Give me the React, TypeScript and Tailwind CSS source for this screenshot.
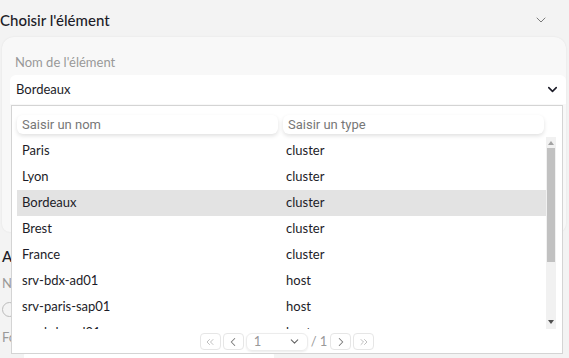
import { ChevronDown, ChevronLeft, ChevronRight, ChevronsLeft, ChevronsRight } from "lucide-react"

const rows = [
  { name: "Paris", type: "cluster" },
  { name: "Lyon", type: "cluster" },
  { name: "Bordeaux", type: "cluster", active: true },
  { name: "Brest", type: "cluster" },
  { name: "France", type: "cluster" },
  { name: "srv-bdx-ad01", type: "host" },
  { name: "srv-paris-sap01", type: "host" },
  { name: "srv-bdx-sql01", type: "host" },
]

export default function App() {
  return (
    <div className="relative w-[569px] h-[358px] overflow-hidden bg-[#f3f3f3] text-[#1c1c28] font-['Lato',sans-serif]">
      {/* section 1 */}
      <div className="flex h-[37px] items-center justify-between pt-[3px] pr-[20px]">
        <h2 className="text-[15px] leading-none font-medium">Choisir l'élément</h2>
        <ChevronDown className="h-[16px] w-[16px] text-[#7a7a7a]" strokeWidth={1.5} />
      </div>
      <div className="ml-[2px] mr-[3px] h-[195px] rounded-t-xl rounded-b-lg bg-[#f8f8f8] pt-[16px] pl-[8px] shadow-[0_0_2px_rgba(0,0,0,0.08)]">
        <div className="pl-[5px] text-[13px] leading-[18px] text-[#999]">Nom de l'élément</div>
        <div className="mt-[4px] flex h-[29px] items-center justify-between rounded-t-md bg-white pl-[6px] pr-[6px] text-[13px]">
          <span>Bordeaux</span>
          <ChevronDown className="h-[15px] w-[15px] text-[#1c1c28]" strokeWidth={2.5} />
        </div>
      </div>

      {/* section 2 (partly hidden) */}
      <div className="pl-[2px] pt-[14px]">
        <h2 className="text-[15px] leading-[20px] font-medium">Attributs</h2>
        <div className="mt-[8px] text-[13px] leading-[18px] text-[#999]">Nom</div>
        <div className="mt-[8px] flex items-center gap-2 text-[13px] text-[#999]">
          <span className="inline-block h-[15px] w-[15px] rounded-full border border-[#bbb]" />
          <span>Cluster</span>
        </div>
        <div className="mt-[8px] text-[13px] leading-[18px] text-[#999]">Format</div>
        <div className="ml-[22px] mt-[6px] h-[20px] w-[250px] rounded bg-white" />
      </div>

      {/* dropdown panel overlay */}
      <div className="absolute left-[11px] top-[105px] flex h-[249px] w-[552px] flex-col border border-[#d4d4d4] bg-white">
        <div className="flex gap-[5px] pl-[5px] pt-[9px]">
          <div className="flex h-[19px] w-[261px] items-center rounded-md bg-white pl-[5px] text-[13px] text-[#777] shadow-[0_2px_4px_rgba(0,0,0,0.12)] font-['Roboto',sans-serif]">
            Saisir un nom
          </div>
          <div className="flex h-[19px] w-[261px] items-center rounded-md bg-white pl-[5px] text-[13px] text-[#777] shadow-[0_2px_4px_rgba(0,0,0,0.12)] font-['Roboto',sans-serif]">
            Saisir un type
          </div>
        </div>
        <div className="mt-[3px] flex h-[192px] pl-[5px]">
          <div className="h-full w-[529px] overflow-hidden pt-[1px]">
            {rows.map((r) => (
              <div
                key={r.name}
                className={`flex h-[26px] items-center text-[13px] ${r.active ? "bg-[#e3e3e3]" : ""}`}
              >
                <span className="w-[264px] pl-[5px]">{r.name}</span>
                <span className="pl-[5px]">{r.type}</span>
              </div>
            ))}
          </div>
          <div className="flex h-full w-[10px] flex-col items-center bg-[#f1f1f1]">
            <div className="mt-[4px] h-0 w-0 border-x-[3px] border-b-[4px] border-x-transparent border-b-[#a3a3a3]" />
            <div className="mt-[3px] h-[114px] w-[8px] bg-[#c1c1c1]" />
            <div className="mt-auto mb-[5px] h-0 w-0 border-x-[3px] border-t-[4px] border-x-transparent border-t-[#505050]" />
          </div>
        </div>
        <div className="mt-[3px] flex items-center justify-center gap-[2px] text-[13px] text-[#999]">
          <button className="flex h-[17px] w-[21px] items-center justify-center rounded border border-[#e6e6e6]">
            <ChevronsLeft className="h-[12px] w-[12px] text-[#aaa]" strokeWidth={1.5} />
          </button>
          <button className="flex h-[17px] w-[21px] items-center justify-center rounded border border-[#e6e6e6]">
            <ChevronLeft className="h-[14px] w-[14px] text-[#777]" strokeWidth={1.75} />
          </button>
          <div className="flex h-[18px] w-[62px] items-center justify-between rounded-md border border-[#ececec] pl-[7px] pr-[6px] shadow-[0_1px_2px_rgba(0,0,0,0.08)]">
            <span className="text-[#999]">1</span>
            <ChevronDown className="h-[13px] w-[13px] text-[#666]" strokeWidth={2} />
          </div>
          <span className="px-[1px] text-[#999]">/ 1</span>
          <button className="flex h-[17px] w-[21px] items-center justify-center rounded border border-[#e6e6e6]">
            <ChevronRight className="h-[14px] w-[14px] text-[#777]" strokeWidth={1.75} />
          </button>
          <button className="flex h-[17px] w-[21px] items-center justify-center rounded border border-[#e6e6e6]">
            <ChevronsRight className="h-[12px] w-[12px] text-[#aaa]" strokeWidth={1.5} />
          </button>
        </div>
      </div>
    </div>
  )
}
